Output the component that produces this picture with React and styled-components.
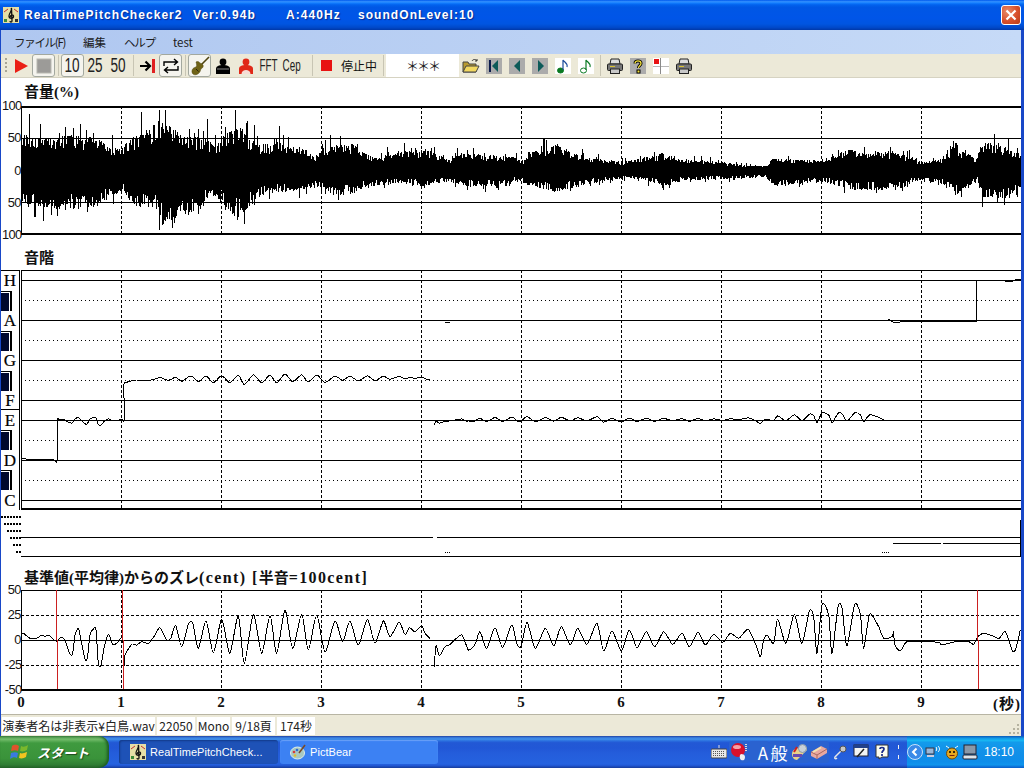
import React from "react";
import styled, { createGlobalStyle } from "styled-components";

const CJK = `"Noto Sans CJK JP", sans-serif`;
const SANS = `"Liberation Sans", "Noto Sans CJK JP", sans-serif`;
const SERIF = `"Liberation Serif", "Noto Sans CJK JP", serif`;

// traced from the recording: [x, y] in 3x crop units, left half then right half
const CENTS_LEFT = [[66,145],[72,146],[90,160],[110,160],[125,150],[135,155],[145,150],[160,163],[172,170],[178,160],[190,160],[198,175],[210,208],[218,205],[225,150],[235,130],[242,160],[255,222],[262,220],[270,150],[280,132],[288,135],[295,235],[303,240],[312,190],[325,148],[338,178],[350,175],[362,160],[368,160],[372,240],[375,210],[395,178],[410,180],[425,170],[445,175],[465,150],[480,128],[500,165],[512,160],[527,122],[545,185],[565,118],[578,115],[595,190],[618,108],[640,203],[662,108],[672,125],[690,205],[715,93],[733,235],[760,88],[785,205],[810,92],[830,205],[855,76],[878,190],[905,88],[925,195],[950,90],[975,200],[1005,108],[1028,170],[1050,108],[1075,180],[1102,103],[1125,175],[1150,108],[1170,155],[1197,112],[1215,148],[1228,128],[1245,140],[1265,122],[1275,145],[1290,160]];
const CENTS_MID = [[1303,245],[1308,182],[1318,212],[1335,185],[1350,178],[1385,150],[1405,195],[1425,178],[1440,140],[1460,190],[1485,128],[1508,187],[1535,120]];
const CENTS_RIGHT = [[15,178],[28,183],[45,112],[70,190],[100,130],[125,182],[148,125],[175,180],[197,130],[225,178],[255,115],[275,198],[300,138],[328,197],[352,135],[375,188],[403,140],[428,185],[455,140],[482,178],[510,145],[532,185],[558,142],[580,180],[605,148],[632,172],[655,145],[680,160],[708,133],[730,175],[745,215],[755,165],[765,150],[785,175],[797,103],[822,175],[847,88],[870,175],[892,78],[905,95],[915,205],[930,60],[950,90],[960,205],[978,65],[990,70],[1005,182],[1028,58],[1045,88],[1055,190],[1073,88],[1100,125],[1115,160],[1140,155],[1145,140],[1148,178],[1165,198],[1185,170],[1240,170],[1280,172],[1290,180],[1330,170],[1370,170],[1385,178],[1397,155],[1415,145],[1440,152],[1462,160],[1480,140],[1500,195],[1510,195],[1525,135]];

const VOL_TOP = [[66,100],[100,110],[160,115],[190,105],[290,110],[320,140],[360,145],[400,110],[440,100],[470,60],[510,80],[560,110],[620,110],[640,140],[680,100],[720,80],[750,115],[800,150],[825,110],[850,140],[900,140],[940,170],[1000,135],[1060,130],[1080,155],[1130,175],[1210,155],[1275,148],[1350,180],[1380,160],[1536,170],
  [1536,170],[1566,185],[1596,155],[1666,135],[1716,160],[1776,175],[1866,185],[1986,160],[2046,180],[2156,185],[2236,195],[2301,198],[2316,175],[2396,180],[2461,180],[2556,145],[2596,165],[2636,155],[2696,160],[2766,185],[2836,175],[2856,140],[2931,175],[2946,125],[3016,140],[3066,165]];
const VOL_BOTTOM = [[66,310],[125,320],[200,330],[290,320],[300,300],[370,275],[400,320],[460,320],[490,360],[540,360],[600,320],[630,285],[660,300],[690,340],[720,345],[770,295],[800,280],[900,270],[960,260],[1005,290],[1060,280],[1090,262],[1200,250],[1265,258],[1350,245],[1400,260],[1536,258],
  [1536,240],[1596,260],[1666,275],[1736,260],[1826,240],[1896,235],[1996,258],[2056,240],[2156,238],[2296,232],[2326,260],[2396,250],[2466,245],[2566,270],[2636,270],[2696,268],[2756,240],[2836,255],[2866,285],[2931,240],[2946,290],[3016,295],[3066,260]];

const toPagePoints = (list, offset) => list.map(([x, y]) => [offset + x / 3, 585 + y / 3]);
const centsLeft = toPagePoints(CENTS_LEFT, 0);
const centsMid = toPagePoints(CENTS_MID, 0);
const centsRight = toPagePoints(CENTS_RIGHT, 512);

function smoothPath(points) {
  let d = `M${points[0][0]} ${points[0][1]}`;
  for (let i = 0; i < points.length - 1; i++) {
    const p0 = points[Math.max(i - 1, 0)];
    const p1 = points[i];
    const p2 = points[i + 1];
    const p3 = points[Math.min(i + 2, points.length - 1)];
    const c1 = [p1[0] + (p2[0] - p0[0]) / 8, p1[1] + (p2[1] - p0[1]) / 8];
    const c2 = [p2[0] - (p3[0] - p1[0]) / 8, p2[1] - (p3[1] - p1[1]) / 8];
    d += `C${c1[0].toFixed(1)} ${c1[1].toFixed(1)} ${c2[0].toFixed(1)} ${c2[1].toFixed(1)} ${p2[0].toFixed(1)} ${p2[1].toFixed(1)}`;
  }
  return d;
}

function interpolate(list, x) {
  for (let i = 0; i < list.length - 1; i++) {
    if (x <= list[i + 1][0]) {
      const span = list[i + 1][0] - list[i][0] || 1;
      const t = Math.max(0, (x - list[i][0]) / span);
      return list[i][1] + (list[i + 1][1] - list[i][1]) * t;
    }
  }
  return list[list.length - 1][1];
}

function buildWave() {
  let seed = 20719;
  const rnd = () => {
    seed = (seed * 1664525 + 1013904223) % 4294967296;
    return seed / 4294967296;
  };
  let d = "";
  for (let x = 0; x < 1000; x++) {
    const zx = (x + 21) * 3;
    const top = interpolate(VOL_TOP, zx) / 3;
    const bottom = interpolate(VOL_BOTTOM, zx) / 3;
    const r1 = rnd();
    const r2 = rnd();
    let y1 = top + (70 - top) * r1 * r1 * 0.4;
    let y2 = bottom - (bottom - 70) * r2 * r2 * 0.4;
    // the tall single-sample spikes above the body of the wave
    if (rnd() < 0.14) y1 -= (70 - top) * 0.65 * rnd();
    if (rnd() < 0.14) y2 += (bottom - 70) * 0.4 * rnd();
    d += `M${x + 0.5} ${Math.max(Math.round(y1), 10) - 6}V${Math.min(Math.round(y2), 132) - 6}`;
  }
  return d;
}

const pitchBase = (x) => {
  if (x < 57) return 460;
  if (x < 123) return 420;
  if (x < 432) return 380;
  if (x < 893) return 420;
  if (x < 977) return 320;
  return 280;
};
const pitchY = ([x, y]) => pitchBase(x) - (640 - y) * 0.2;

const pitchFirst = [];
centsLeft.forEach((p, i) => {
  const prev = centsLeft[i - 1];
  if (prev && pitchBase(prev[0]) !== pitchBase(p[0])) pitchFirst.push([p[0], pitchBase(prev[0])]);
  pitchFirst.push([p[0], pitchY(p)]);
});
const allRight = [...centsMid, ...centsRight];
const pitchSecond = allRight.filter((p) => p[0] < 890).map((p) => [p[0], pitchY(p)]);
const pitchThird = "M888 319L893 322L900 322L906 321.6H976V280.6H1000L1012 281.6L1016 279.6L1021 279";

const GRID_X = [100, 200, 300, 400, 500, 600, 700, 800, 900];
const TIME_LABELS = ["0", "1", "2", "3", "4", "5", "6", "7", "8", "9"];
const NOTE_ROWS = ["H", null, "A", null, "G", null, "F", "E", null, "D", null, "C"];
const PYRAMID = [[1, 516], [4, 523], [7, 530], [10, 537], [13, 544], [16, 551]];

const GlobalStyle = createGlobalStyle`
  html, body { margin: 0; padding: 0; background: #fff; }
  body { width: 1024px; height: 768px; overflow: hidden; }
`;

const Screen = styled.div`
  width: 1024px;
  height: 768px;
  display: flex;
  flex-direction: column;
  overflow: hidden;
`;

const Window = styled.div`
  height: 736px;
  display: flex;
  flex-direction: column;
  background: #1848c8;
`;

const TitleBar = styled.div`
  height: 30px;
  display: flex;
  align-items: center;
  padding: 0 3px 0 3px;
  background: linear-gradient(#0058ee 0%, #3593ff 6%, #127dff 10%, #0262ee 16%, #0057e5 24%, #0055e8 60%, #0055e0 80%, #0048c8 92%, #0038a8 100%);
`;

const AppIconSlot = styled.span`
  width: 16px;
  height: 16px;
  display: flex;
  margin-right: ${(p) => p.$gap || 0}px;
`;

const TitleText = styled.span`
  width: ${(p) => p.$w}px;
  flex: none;
  color: #fff;
  font: bold 12px ${SANS};
  letter-spacing: 1.05px;
  white-space: nowrap;
  text-shadow: 1px 1px 1px #0a2a90;
`;

const CloseButton = styled.button`
  width: 20px;
  height: 20px;
  margin-left: auto;
  padding: 0;
  border: 1px solid #fff;
  border-radius: 3px;
  background: radial-gradient(circle at 30% 30%, #e88a68, #d8502c 55%, #b83c18);
  display: flex;
  align-items: center;
  justify-content: center;
`;

const Client = styled.div`
  flex: 1;
  display: flex;
  flex-direction: column;
  margin: 0 3px 0 1px;
  background: #fff;
  min-height: 0;
`;

const MenuBar = styled.div`
  height: 24px;
  display: flex;
  align-items: center;
  padding-left: 13px;
  gap: 18px;
  background: linear-gradient(90deg, #afc7f0, #c6daf7);
`;

const MenuItem = styled.span`
  font: 11.5px ${CJK};
  letter-spacing: ${(p) => p.$ls || 0}px;
  color: #1a1a1a;
`;

const Toolbar = styled.div`
  height: 24px;
  box-sizing: border-box;
  display: flex;
  align-items: center;
  padding-left: 4px;
  background: #ece9d8;
  border-bottom: 1px solid #d6d3c2;
`;

const Grip = styled.span`
  width: 2px;
  height: 16px;
  margin-right: 2px;
  background: repeating-linear-gradient(#a8a594 0 2px, transparent 2px 4px);
`;

const ToolButton = styled.span`
  width: ${(p) => p.$w || 23}px;
  height: 23px;
  box-sizing: border-box;
  flex: none;
  display: flex;
  align-items: center;
  justify-content: center;
  border-radius: 3px;
  border: 1px solid ${(p) => (p.$active ? "#a3a89f" : "transparent")};
  background: ${(p) => (p.$active ? "#f5f4ee" : "transparent")};
`;

const Sep = styled.span`
  width: ${(p) => p.$w || 6}px;
  height: 21px;
  box-sizing: border-box;
  flex: none;
  display: flex;
  justify-content: center;
  padding-left: ${(p) => (p.$w ? p.$w - 6 : 0)}px;
  &::before {
    content: "";
    width: 1px;
    background: #c8c5b4;
  }
`;

const NarrowText = styled.span`
  display: inline-block;
  font: ${(p) => p.$size || 20}px ${SANS};
  color: #222;
  transform: scaleX(${(p) => p.$scale || 0.68});
  white-space: nowrap;
`;

const StateLabel = styled.span`
  font: 12px ${CJK};
  color: #111;
`;

const PitchField = styled.span`
  width: 73px;
  height: 23px;
  flex: none;
  background: #fff;
  display: flex;
  align-items: center;
  justify-content: center;
  font: 13px ${CJK};
  letter-spacing: -2px;
  color: #222;
`;

const Plots = styled.div`
  flex: 1;
  display: flex;
  flex-direction: column;
  min-height: 0;
  overflow: hidden;
`;

const Heading = styled.h2`
  margin: 0;
  height: ${(p) => p.$h}px;
  box-sizing: border-box;
  padding: 0 0 ${(p) => p.$pb}px 23px;
  display: flex;
  align-items: flex-end;
  font: bold 15px/20px ${SERIF};
  color: #111;
  white-space: pre;
`;

const WideLatin = styled.span`
  font-size: 16px;
  letter-spacing: 1.4px;
`;

const ChartRow = styled.div`
  display: flex;
  height: ${(p) => p.$h}px;
`;

const AxisColumn = styled.div`
  width: 20px;
  flex: none;
  height: ${(p) => p.$h + 14}px;
  margin-top: -7px;
  display: flex;
  flex-direction: column;
  justify-content: space-between;
  align-items: flex-end;
  position: relative;
  z-index: 1;
`;

const AxisLabel = styled.span`
  font: 13.5px/14px ${SANS};
  letter-spacing: -0.7px;
  color: #111;
  transform: scaleX(0.95);
  transform-origin: right;
`;

const NoteColumn = styled.div`
  width: 19px;
  margin-right: 1px;
  flex: none;
  display: flex;
  flex-direction: column;
  border-top: 1px solid #000;
  border-right: 1px solid #000;
  box-sizing: border-box;
`;

const NoteCell = styled.div`
  height: 20px;
  display: flex;
  align-items: center;
  justify-content: center;
  font: 17px/19px ${SERIF};
  -webkit-text-stroke: 0.2px #000;
  color: #000;
  box-shadow: inset 0 -1px 0 ${(p) => (p.$line ? "#000" : "transparent")};
`;

const BlackKey = styled.div`
  height: 20px;
  width: 11px;
  box-sizing: border-box;
  background: #00082e;
  border-top: 1px solid #000;
  border-right: 2px solid #000;
  box-shadow: inset -1px 1px 0 #fff;
`;

const ChartSvg = styled.svg`
  display: block;
  flex: none;
  overflow: hidden;
`;

const StripRow = styled.div`
  display: flex;
  height: 47px;
`;

const TimeRow = styled.div`
  flex: 1;
  display: grid;
  grid-template-columns: repeat(10, 100px) 1fr;
  margin-left: -30px;
  align-items: center;
`;

const TimeLabel = styled.span`
  text-align: center;
  font: bold 15px ${SERIF};
  color: #111;
`;

const SecondsLabel = styled.span`
  text-align: right;
  font: bold 15px ${SERIF};
  letter-spacing: 1px;
  color: #111;
  white-space: nowrap;
`;

const StatusBar = styled.div`
  height: 22px;
  box-sizing: border-box;
  padding: 2px 0 0 1px;
  display: flex;
  gap: 2px;
  background: #ece9d8;
  border-top: 1px solid #b8b5a4;
`;

const StatusCell = styled.span`
  height: 18px;
  width: ${(p) => p.$w}px;
  box-sizing: border-box;
  flex: none;
  background: #fff;
  font: 12px/18px ${CJK};
  color: #222;
  text-align: center;
  white-space: nowrap;
  overflow: hidden;
`;

const StatusGrip = styled.span`
  margin: 5px 1px 0 auto;
  display: flex;
`;

const Taskbar = styled.div`
  height: 32px;
  display: flex;
  align-items: center;
  background: linear-gradient(#1f3f9e 0%, #3165c4 3%, #3682e5 6%, #4490e6 10%, #3883e5 12%, #2b71e0 15%, #2663da 18%, #235bd6 20%, #2258d5 23%, #2157d6 38%, #245ddb 54%, #2562df 86%, #245fdc 89%, #2158d4 92%, #1d4ec0 95%, #1941a5 98%);
`;

const StartButton = styled.div`
  width: 109px;
  height: 32px;
  box-sizing: border-box;
  flex: none;
  display: flex;
  align-items: center;
  padding-left: 10px;
  gap: 7px;
  border-radius: 0 10px 10px 0;
  background: linear-gradient(#4f9a4f 0%, #74bd6c 10%, #3f9a3f 22%, #3a933a 70%, #2f7d33 90%, #25682b 100%);
  box-shadow: inset -2px 0 3px #1d5a22;
`;

const StartText = styled.span`
  font: italic bold 13px ${CJK};
  color: #fff;
  text-shadow: 1px 1px 1px #1c4a1c;
`;

const TaskButton = styled.div`
  width: ${(p) => p.$w}px;
  height: 24px;
  margin-left: ${(p) => p.$ml}px;
  box-sizing: border-box;
  flex: none;
  display: flex;
  align-items: center;
  gap: 4px;
  padding-left: ${(p) => p.$pl}px;
  border-radius: 3px;
  background: ${(p) => (p.$pressed ? "#1e52b7" : "#3c81f3")};
  box-shadow: ${(p) => (p.$pressed ? "inset 1px 1px 2px #123a88" : "inset 0 1px 1px #6aa0f8")};
  font: 11px ${SANS};
  letter-spacing: 0.05px;
  color: #fff;
  white-space: nowrap;
`;

const QuickArea = styled.div`
  margin-left: auto;
  display: flex;
  align-items: center;
`;

const QuickIcon = styled.span`
  width: ${(p) => p.$w || 20}px;
  height: 22px;
  flex: none;
  display: flex;
  align-items: center;
  justify-content: ${(p) => (p.$end ? "flex-end" : "center")};
  box-sizing: border-box;
  padding-right: ${(p) => (p.$end ? 1 : 0)}px;
  border-radius: 3px;
  background: ${(p) => (p.$raised ? "#2a62d0" : "transparent")};
  font: 17px ${CJK};
  color: #fff;
`;

const Tray = styled.div`
  width: 117px;
  height: 32px;
  box-sizing: border-box;
  flex: none;
  margin-left: 1px;
  display: flex;
  align-items: center;
  background: linear-gradient(#0c59b9 0%, #139ee9 8%, #18b5f2 14%, #139beb 20%, #1290e8 50%, #0d8dea 80%, #0f94ed 90%, #095bc9 100%);
`;

const TrayIcon = styled.span`
  width: ${(p) => p.$w || 18}px;
  flex: none;
  display: flex;
  justify-content: center;
`;

const Clock = styled.span`
  margin-left: 5px;
  font: 12px ${SANS};
  color: #fff;
`;

const Glyph = ({ w = 16, h = 16, children }) => (
  <svg width={w} height={h} viewBox={`0 0 ${w} ${h}`}>{children}</svg>
);

const AppIcon = () => (
  <Glyph>
    <rect width="16" height="16" fill="#e6dfa6" />
    <path d="M1 5L5 2M15 5L11 2" stroke="#c03030" fill="none" />
    <path d="M8 1C10 3 6 6 6 9C6 12 11 12 10.5 9C10 7 7 8 7.5 10M8.5 1L9 14C9 15.5 7 15.5 7 14" stroke="#111" strokeWidth="1.3" fill="none" />
    <rect x="1" y="12" width="3" height="3" fill="#3a8a3a" />
    <rect x="12" y="12" width="3" height="3" fill="#333" />
  </Glyph>
);

const PlayIcon = () => (
  <Glyph><path d="M2 1L15 8L2 15Z" fill="#ea1f16" /></Glyph>
);
const StopIcon = () => (
  <Glyph><rect x="1" y="1" width="14" height="14" fill="#9c9b98" stroke="#b8b7b0" /></Glyph>
);
const JumpIcon = () => (
  <Glyph>
    <path d="M0 8H9M5.5 3.5L10 8L5.5 12.5" stroke="#000" strokeWidth="2.2" fill="none" />
    <rect x="12" y="1" width="3" height="14" fill="#e02020" />
  </Glyph>
);
const LoopIcon = () => (
  <Glyph w={18} h={18}>
    <path d="M2 9V5H15M12 2L15.5 5L12 8M16 9V13H3M6 10L2.5 13L6 16" stroke="#000" strokeWidth="1.4" fill="none" />
  </Glyph>
);
const ViolinIcon = () => (
  <Glyph w={20} h={20}>
    <path d="M10 10L19 1" stroke="#4e4410" strokeWidth="1.6" />
    <path d="M6 6C8 5 9 6 10 7C12 8 14 9 13 11C12 13 11 12 10.5 14C10 18 5 20 3 18C1 16 2 12 5 11.5C7 11 7 9 6 6Z" fill="#6f6216" stroke="#4e4410" strokeWidth="0.5" />
    <path d="M6 13L8.5 15.5" stroke="#2a2208" />
  </Glyph>
);
const BlackPerson = () => (
  <Glyph>
    <circle cx="8" cy="4" r="3.4" fill="#000" />
    <path d="M1 16V11C1 8 4 7 8 7C12 7 15 8 15 11V16Z" fill="#000" />
    <path d="M2 11H14" stroke="#888" />
  </Glyph>
);
const RedPerson = () => (
  <Glyph>
    <circle cx="8" cy="4" r="3.4" fill="#e02818" />
    <path d="M1 16V11C1 8 4 7 8 7C12 7 15 8 15 11V16Z" fill="#e02818" />
    <path d="M3.5 16C3.5 10.5 12.5 10.5 12.5 16Z" fill="#f6dcd4" />
  </Glyph>
);
const RedSquare = () => (
  <Glyph w={11} h={11}><rect width="11" height="11" fill="#e81212" /></Glyph>
);
const FolderIcon = () => (
  <Glyph w={18} h={16}>
    <path d="M1 4H6L7 6H14V14H1Z" fill="#b89a30" stroke="#444" />
    <path d="M1 14L4 8H17L14 14Z" fill="#f2d860" stroke="#444" />
    <path d="M10 3C11 1 14 1 15 3M15 3V1M15 3H13" stroke="#333" fill="none" />
  </Glyph>
);
const NavIcon = ({ first, dir }) => (
  <Glyph>
    <rect width="16" height="16" fill="#ababab" />
    {first && <rect x="3" y="2" width="2" height="12" fill="#0b1b4a" />}
    <path d={dir === "right" ? "M6 2L12 8L6 14Z" : first ? "M12 2L6 8L12 14Z" : "M11 2L5 8L11 14Z"} fill="#0c5a58" />
  </Glyph>
);
const NoteIcon = ({ hollow }) => (
  <Glyph>
    <rect width="16" height="16" fill="#fff" />
    <ellipse cx="5.5" cy="12.5" rx="3" ry="2.5" fill={hollow ? "#fff" : "#0a7a22"} stroke="#0a7a22" />
    <path d="M8 12V2C9 4 13 5 12 9" stroke={hollow ? "#0a7a22" : "#1a4a9a"} fill="none" strokeWidth="1.2" />
  </Glyph>
);
const PrinterIcon = () => (
  <Glyph>
    <path d="M4 1H12L13 6H3Z" fill="#dcdcdc" stroke="#222" />
    <rect x="0.5" y="6" width="15" height="6.5" rx="1" fill="#777" stroke="#222" />
    <rect x="3.5" y="11" width="9" height="4.5" fill="#c8c8c8" stroke="#222" />
    <path d="M3 8.5H8" stroke="#d8c030" />
  </Glyph>
);
const HelpIcon = () => (
  <Glyph>
    <rect width="16" height="16" fill="#ababab" />
    <path d="M5 5.5C5 2 11 2 11 5.5C11 7.5 8.5 7.5 8.5 10" stroke="#000" strokeWidth="3" fill="none" />
    <path d="M5 5.5C5 2 11 2 11 5.5C11 7.5 8.5 7.5 8.5 10" stroke="#f4e23c" strokeWidth="1.3" fill="none" />
    <rect x="7" y="12" width="3" height="3" fill="#f4e23c" stroke="#000" />
  </Glyph>
);
const CrossIcon = () => (
  <Glyph>
    <rect width="16" height="16" fill="#fff" />
    <path d="M0 8.5H16" stroke="#b8b8b8" />
    <path d="M7.5 0V16" stroke="#8a8a8a" />
    <rect x="1" y="1" width="5" height="5" fill="#e81212" />
  </Glyph>
);
const CloseX = () => (
  <Glyph w={12} h={12}><path d="M1.5 1.5L10.5 10.5M10.5 1.5L1.5 10.5" stroke="#fff" strokeWidth="2.2" /></Glyph>
);
const StartFlag = () => (
  <svg width="20" height="20" viewBox="0 0 20 20">
    <path d="M2 4C5 2 7 3 9 4L8 9C6 8 4 8 1 9Z" fill="#e0532c" />
    <path d="M11 4C13 5 15 5 18 3L17 8C15 9 13 10 10 9Z" fill="#7ab82c" />
    <path d="M1 11C4 10 6 10 8 11L7 16C5 15 3 15 0 17Z" fill="#3a7ae0" />
    <path d="M10 11C12 12 14 11 17 10L16 15C14 16 12 17 9 16Z" fill="#f2c420" />
  </svg>
);
const PaletteIcon = () => (
  <Glyph>
    <ellipse cx="7.5" cy="9" rx="7" ry="6" fill="#a9c8c0" stroke="#dfeee8" />
    <circle cx="4" cy="8" r="1.3" fill="#d83a3a" />
    <circle cx="7" cy="6" r="1.3" fill="#2f6ad0" />
    <circle cx="5" cy="11.5" r="1.3" fill="#e2c02a" />
    <path d="M9 9L15 1" stroke="#7a4a24" strokeWidth="1.6" />
  </Glyph>
);
const KeyboardIcon = () => (
  <Glyph>
    <path d="M8 4V1" stroke="#ddd" />
    <rect x="0" y="5" width="16" height="9" rx="1" fill="#e8e8e8" stroke="#444" />
    <path d="M2 7.5H14M2 9.5H14M2 11.5H14" stroke="#555" strokeDasharray="1 1" />
  </Glyph>
);
const RedBallIcon = () => (
  <Glyph w={18} h={18}>
    <circle cx="8" cy="7" r="7" fill="#d8102c" />
    <ellipse cx="7" cy="4" rx="4" ry="2" fill="#f5a0a8" />
    <path d="M11 11C15 11 16 14 14 17C11 18 9 16 10 12Z" fill="#f0f0f0" />
    <path d="M16 1V9" stroke="#ddd" strokeDasharray="1 1" strokeWidth="2" />
  </Glyph>
);
const ToolboxIcon = () => (
  <Glyph w={18} h={18}>
    <path d="M2 11C2 6 8 4 10 6C12 2 17 2 17 7L12 12L7 17C4 17 2 14 2 11Z" fill="#e8d28a" />
    <circle cx="12.5" cy="5.5" r="4" fill="#c8d0d8" stroke="#8a98a8" />
    <path d="M4 9L7 4" stroke="#d02020" strokeWidth="2" />
    <rect x="3" y="11" width="9" height="3" fill="#6a4ab0" />
  </Glyph>
);
const EraserIcon = () => (
  <Glyph w={18} h={18}>
    <path d="M1 9L11 3L17 6V10L7 16L1 13Z" fill="#e8a8a0" />
    <path d="M1 9L7 12L17 6M7 12V16" stroke="#a86860" fill="none" />
    <path d="M3 9L11 4.5" stroke="#f4e4b0" strokeWidth="2" />
  </Glyph>
);
const MicIcon = () => (
  <Glyph>
    <path d="M9 7L3 13C2 15 4 15 5 14" stroke="#e8e8e8" strokeWidth="1.4" fill="none" />
    <circle cx="11" cy="5" r="3" fill="#c8c8c8" stroke="#555" />
  </Glyph>
);
const PenBoardIcon = () => (
  <Glyph>
    <rect x="1" y="1" width="14" height="11" fill="#f4f4f4" stroke="#223" />
    <rect x="1" y="1" width="14" height="3" fill="#22408a" />
    <path d="M4 13L11 5" stroke="#222" strokeWidth="1.5" />
  </Glyph>
);
const HelpBubble = () => (
  <Glyph>
    <path d="M2 1H14V13H8L5 15V13H2Z" fill="#fdfdf0" stroke="#333" />
    <path d="M6 5C6 3 10 3 10 5C10 7 8 6.5 8 9M8 10V12" stroke="#1a2a8a" strokeWidth="1.7" fill="none" />
  </Glyph>
);
const Divider = () => (
  <Glyph w={4} h={16}>
    <path d="M1.5 1V5M1.5 11V15" stroke="#f0f0f0" />
  </Glyph>
);
const Chevron = () => (
  <Glyph>
    <circle cx="8" cy="8" r="7.5" fill="#3a8ae8" stroke="#c8e0fa" />
    <path d="M9.5 4.5L6 8L9.5 11.5" stroke="#fff" strokeWidth="2" fill="none" />
  </Glyph>
);
const NetworkIcon = () => (
  <Glyph>
    <rect x="1" y="4" width="8" height="6" fill="#9ab8d8" stroke="#334" />
    <rect x="2" y="11" width="7" height="2" fill="#ccd" />
    <path d="M11 3C12 4 12 6 11 7M13 2C15 4 15 6 13 8" stroke="#fff" fill="none" />
  </Glyph>
);
const BugIcon = () => (
  <Glyph>
    <circle cx="8" cy="9.5" r="5.5" fill="#e8a820" stroke="#6a4a10" />
    <circle cx="6" cy="8" r="1" fill="#000" />
    <circle cx="10" cy="8" r="1" fill="#000" />
    <path d="M5 4C4 3 3 3 2 2M11 4C12 3 13 3 14 2" stroke="#fff" fill="none" />
    <path d="M5.5 11.5H10.5" stroke="#7a2010" />
  </Glyph>
);
const LaptopIcon = () => (
  <Glyph>
    <rect x="2" y="1" width="12" height="9" fill="#8a98a8" stroke="#223" />
    <rect x="1" y="11" width="14" height="4" rx="1" fill="#dfe4ea" stroke="#223" />
  </Glyph>
);
const StatusGripIcon = () => (
  <Glyph w={12} h={12}>
    <path d="M9 2h2v2H9zM5 6h2v2H5zM9 6h2v2H9zM1 10h2v2H1zM5 10h2v2H5zM9 10h2v2H9z" fill="#b5b2a0" />
  </Glyph>
);

const VerticalGrid = ({ height }) =>
  GRID_X.map((x) => (
    <path key={x} d={`M${x + 0.5} 0V${height}`} stroke="#000" strokeDasharray="3 2" />
  ));

const waveform = buildWave();

function VolumeChart() {
  return (
    <ChartSvg width="1000" height="129" viewBox="0 0 1000 129" shapeRendering="crispEdges">
      <path d="M0 32.5H1000M0 96.5H1000M0.5 0V129" stroke="#000" />
      <VerticalGrid height={129} />
      <path d={waveform} stroke="#000" />
      <path d="M0 1H1000M0 128H1000" stroke="#000" strokeWidth="2" />
    </ChartSvg>
  );
}

function PitchChart() {
  return (
    <ChartSvg width="1000" height="240" viewBox="0 0 1000 240" shapeRendering="crispEdges">
      <path d="M0 0.5H1000M0 10.5H1000M0 50.5H1000M0 90.5H1000M0 130.5H1000M0 150.5H1000M0 190.5H1000M0 230.5H1000M0.5 0V240" stroke="#000" />
      <path d="M0 30.5H1000M0 70.5H1000M0 110.5H1000M0 170.5H1000M0 210.5H1000" stroke="#000" strokeDasharray="1 3" />
      <VerticalGrid height={240} />
      <g transform="translate(-21 -270)" fill="none" stroke="#000">
        <path d={smoothPath(pitchFirst)} />
        <path d={smoothPath(pitchSecond)} />
        <path d={pitchThird} />
      </g>
      <path d="M424 53L429 52" stroke="#000" />
      <path d="M0 239H1000" stroke="#000" strokeWidth="2" />
    </ChartSvg>
  );
}

function ScaleStrip() {
  return (
    <ChartSvg width="1020" height="47" viewBox="0 0 1020 47" shapeRendering="crispEdges">
      {PYRAMID.map(([x, y]) => (
        <path key={y} d={`M${x - 1} ${y - 509}H20`} stroke="#000" strokeWidth="2" strokeDasharray="2 1" />
      ))}
      <path d="M20 27.5H1020M20 46.5H1020M1019.5 10V47" stroke="#000" />
      <path d="M444 42.5H450M881 42.5H889" stroke="#000" strokeDasharray="1 1" />
      <path d="M432 27.5H436" stroke="#fff" />
      <path d="M892 33.5H940M942 33.5H1020" stroke="#000" />
    </ChartSvg>
  );
}

function CentsChart() {
  return (
    <ChartSvg width="1000" height="101" viewBox="21 590 1000 101" shapeRendering="crispEdges">
      <path d="M21 590.5H1021M21.5 590V691M21 640.5H1021" stroke="#000" />
      <path d="M21 615.5H1021M21 665.5H1021" stroke="#000" strokeDasharray="3 2" />
      {GRID_X.map((x) => (
        <path key={x} d={`M${x + 21.5} 590V691`} stroke="#000" strokeDasharray="3 2" />
      ))}
      <path d={smoothPath(centsLeft)} fill="none" stroke="#000" />
      <path d={smoothPath(allRight)} fill="none" stroke="#000" />
      <path d="M56.5 590V640M57.5 640V691M122.5 590V640M123.5 640V691M977.5 590V640M978.5 640V691" stroke="#cc2020" />
      <path d="M21 690H1021" stroke="#000" strokeWidth="2" />
    </ChartSvg>
  );
}

export default function App() {
  return (
    <Screen>
      <GlobalStyle />
      <Window>
        <TitleBar>
          <AppIconSlot $gap={5}><AppIcon /></AppIconSlot>
          <TitleText $w={169}>RealTimePitchChecker2</TitleText>
          <TitleText $w={93}>Ver:0.94b</TitleText>
          <TitleText $w={72}>A:440Hz</TitleText>
          <TitleText $w={130}>soundOnLevel:10</TitleText>
          <CloseButton><CloseX /></CloseButton>
        </TitleBar>
        <Client>
          <MenuBar>
            <MenuItem $ls={-1.3}>ファイル(F)</MenuItem>
            <MenuItem>編集</MenuItem>
            <MenuItem $ls={-1.2}>ヘルプ</MenuItem>
            <MenuItem>test</MenuItem>
          </MenuBar>
          <Toolbar>
            <Grip />
            <ToolButton><PlayIcon /></ToolButton>
            <ToolButton $active><StopIcon /></ToolButton>
            <Sep />
            <ToolButton $active><NarrowText>10</NarrowText></ToolButton>
            <ToolButton><NarrowText>25</NarrowText></ToolButton>
            <ToolButton><NarrowText>50</NarrowText></ToolButton>
            <Sep />
            <ToolButton><JumpIcon /></ToolButton>
            <ToolButton $active><LoopIcon /></ToolButton>
            <Sep />
            <ToolButton $active><ViolinIcon /></ToolButton>
            <ToolButton><BlackPerson /></ToolButton>
            <ToolButton><RedPerson /></ToolButton>
            <ToolButton><NarrowText $size={17} $scale={0.58}>FFT</NarrowText></ToolButton>
            <ToolButton><NarrowText $size={17} $scale={0.58}>Cep</NarrowText></ToolButton>
            <Sep $w={12} />
            <ToolButton><RedSquare /></ToolButton>
            <ToolButton $w={42}><StateLabel>停止中</StateLabel></ToolButton>
            <Sep />
            <PitchField>＊＊＊</PitchField>
            <ToolButton><FolderIcon /></ToolButton>
            <ToolButton><NavIcon first /></ToolButton>
            <ToolButton><NavIcon /></ToolButton>
            <ToolButton><NavIcon dir="right" /></ToolButton>
            <ToolButton><NoteIcon /></ToolButton>
            <ToolButton><NoteIcon hollow /></ToolButton>
            <Sep />
            <ToolButton><PrinterIcon /></ToolButton>
            <ToolButton><HelpIcon /></ToolButton>
            <ToolButton><CrossIcon /></ToolButton>
            <ToolButton><PrinterIcon /></ToolButton>
          </Toolbar>
          <Plots>
            <Heading $h={28} $pb={4}>音量(%)</Heading>
            <ChartRow $h={129}>
              <AxisColumn $h={129}>
                {["100", "50", "0", "50", "100"].map((label, i) => (
                  <AxisLabel key={i}>{label}</AxisLabel>
                ))}
              </AxisColumn>
              <VolumeChart />
            </ChartRow>
            <Heading $h={35} $pb={2}>音階</Heading>
            <ChartRow $h={240}>
              <NoteColumn>
                {NOTE_ROWS.map((note, i) =>
                  note ? <NoteCell key={i} $line={note === "F"}>{note}</NoteCell> : <BlackKey key={i} />
                )}
              </NoteColumn>
              <PitchChart />
            </ChartRow>
            <StripRow><ScaleStrip /></StripRow>
            <Heading $h={33} $pb={2}>
              基準値(平均律)からのズレ<WideLatin>(cent) [</WideLatin>半音<WideLatin>=100cent]</WideLatin>
            </Heading>
            <ChartRow $h={101}>
              <AxisColumn $h={100}>
                {["50", "25", "0", "-25", "-50"].map((label) => (
                  <AxisLabel key={label}>{label}</AxisLabel>
                ))}
              </AxisColumn>
              <CentsChart />
            </ChartRow>
            <TimeRow>
              {TIME_LABELS.map((label) => (
                <TimeLabel key={label}>{label}</TimeLabel>
              ))}
              <SecondsLabel>(秒)</SecondsLabel>
            </TimeRow>
          </Plots>
          <StatusBar>
            <StatusCell $w={153}>演奏者名は非表示¥白鳥.wav</StatusCell>
            <StatusCell $w={38}>22050</StatusCell>
            <StatusCell $w={33}>Mono</StatusCell>
            <StatusCell $w={43}>9/18頁</StatusCell>
            <StatusCell $w={38}>174秒</StatusCell>
            <StatusGrip><StatusGripIcon /></StatusGrip>
          </StatusBar>
        </Client>
      </Window>
      <Taskbar>
        <StartButton>
          <StartFlag />
          <StartText>スタート</StartText>
        </StartButton>
        <TaskButton $w={159} $ml={10} $pl={11} $pressed>
          <AppIcon />
          RealTimePitchCheck...
        </TaskButton>
        <TaskButton $w={158} $ml={2} $pl={10}>
          <PaletteIcon />
          PictBear
        </TaskButton>
        <QuickArea>
          <QuickIcon><KeyboardIcon /></QuickIcon>
          <QuickIcon $raised><RedBallIcon /></QuickIcon>
          <QuickIcon $raised $end>A</QuickIcon>
          <QuickIcon $raised>般</QuickIcon>
          <QuickIcon $raised><ToolboxIcon /></QuickIcon>
          <QuickIcon $raised><EraserIcon /></QuickIcon>
          <QuickIcon $w={22}><MicIcon /></QuickIcon>
          <QuickIcon><PenBoardIcon /></QuickIcon>
          <QuickIcon $w={21}><HelpBubble /></QuickIcon>
          <QuickIcon $w={14}><Divider /></QuickIcon>
        </QuickArea>
        <Tray>
          <TrayIcon $w={16}><Chevron /></TrayIcon>
          <TrayIcon $w={20}><NetworkIcon /></TrayIcon>
          <TrayIcon><BugIcon /></TrayIcon>
          <TrayIcon><LaptopIcon /></TrayIcon>
          <Clock>18:10</Clock>
        </Tray>
      </Taskbar>
    </Screen>
  );
}
